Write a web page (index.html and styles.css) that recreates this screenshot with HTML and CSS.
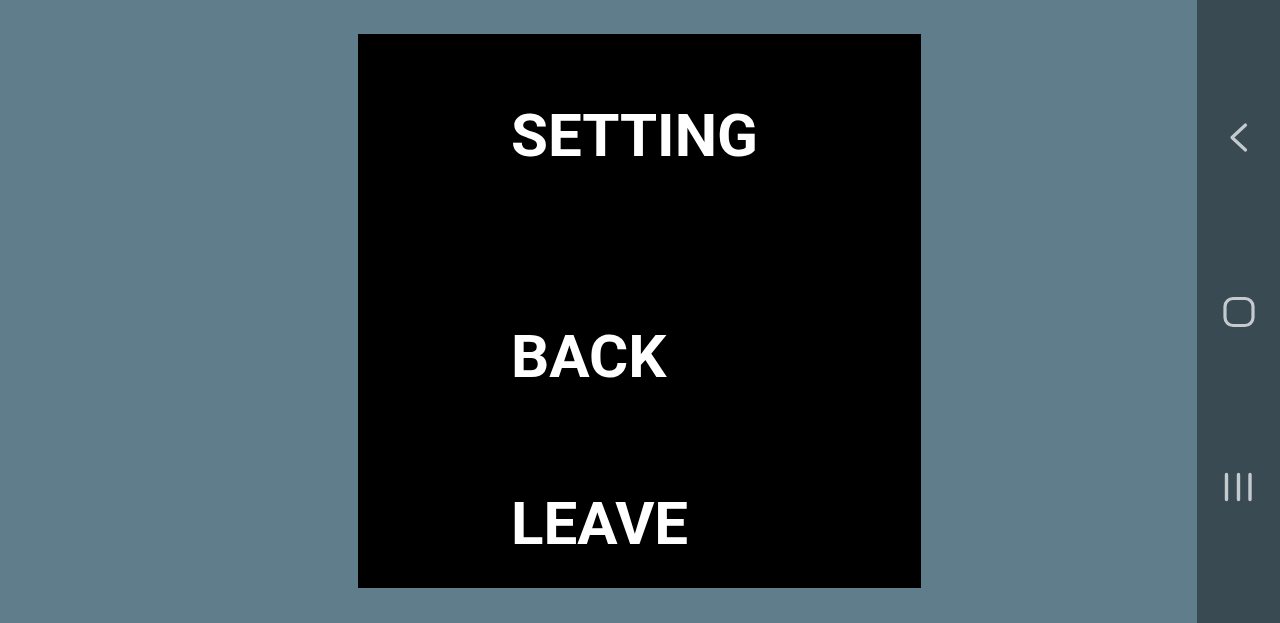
FILE: index.html
```html
<!DOCTYPE html>
<html lang="en">
<head>
<meta charset="utf-8">
<title>Setting</title>
<link rel="stylesheet" href="styles.css">
</head>
<body>
<div class="screen">
  <main class="stage">
    <section class="dialog">
      <div class="item item-title">SETTING</div>
      <div class="item item-back">BACK</div>
      <div class="item item-leave">LEAVE</div>
    </section>
  </main>
  <nav class="navbar">
    <svg class="nav-icon" width="40" height="40" viewBox="0 0 40 40">
      <path d="M26.5 8 L13 20.5 L26.5 33" fill="none" stroke="#c3cbcf" stroke-width="3.2" stroke-linecap="round" stroke-linejoin="round"/>
    </svg>
    <svg class="nav-icon" width="40" height="40" viewBox="0 0 40 40">
      <rect x="6" y="6.5" width="28" height="27" rx="8" ry="8" fill="none" stroke="#c3cbcf" stroke-width="3.2"/>
    </svg>
    <svg class="nav-icon" width="40" height="40" viewBox="0 0 40 40">
      <path d="M7.5 7.5 V32.5 M19.5 7.5 V32.5 M31 7.5 V32.5" fill="none" stroke="#c3cbcf" stroke-width="3.4" stroke-linecap="round"/>
    </svg>
  </nav>
</div>
</body>
</html>
```

FILE: styles.css
```css
html, body {
  margin: 0;
  padding: 0;
  width: 1280px;
  height: 623px;
  overflow: hidden;
}

.screen {
  display: flex;
  width: 1280px;
  height: 623px;
}

.stage {
  flex: 0 0 1197px;
  background: #607d8b;
  padding: 34px 0 0 358px;
  box-sizing: border-box;
}

.dialog {
  width: 563px;
  height: 554px;
  background: #000000;
  box-sizing: border-box;
  padding: 72px 0 0 153px;
  display: flex;
  flex-direction: column;
}

.item {
  font-family: Roboto, "Liberation Sans", Arial, sans-serif;
  font-weight: 700;
  font-size: 60px;
  line-height: 60px;
  height: 60px;
  color: #ffffff;
  white-space: nowrap;
}

.item-back {
  margin-top: 161px;
}

.item-leave {
  margin-top: 107px;
}

.navbar {
  flex: 0 0 83px;
  background: #3a4a52;
  display: flex;
  flex-direction: column;
  align-items: center;
  padding-top: 117px;
  gap: 135px;
  box-sizing: border-box;
}

.nav-icon {
  display: block;
  flex: 0 0 40px;
}
```
